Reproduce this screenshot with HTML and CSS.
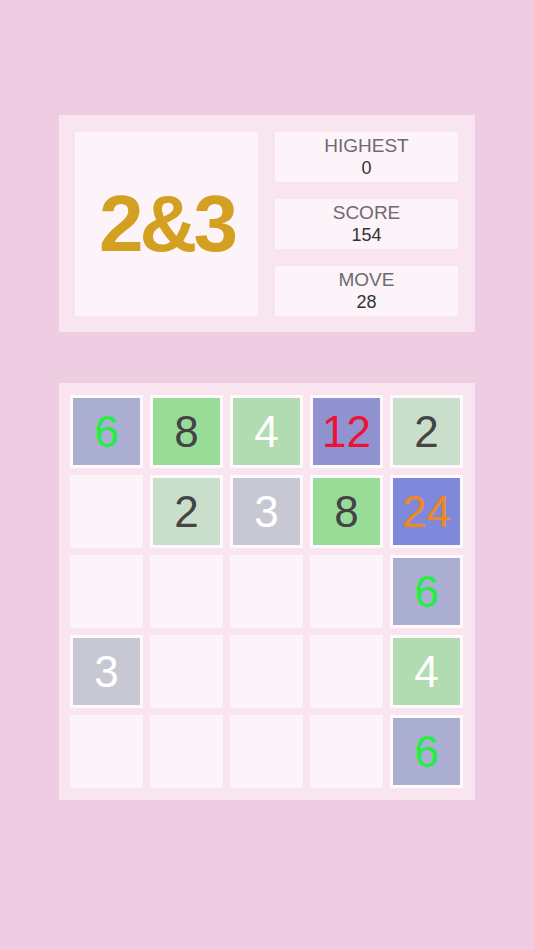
FILE: index.html
```html
<!DOCTYPE html>
<html lang="en">
<head>
    <meta charset="UTF-8">
    <meta name="viewport" content="width=device-width, initial-scale=1.0">
    <title>2&amp;3</title>
    <link rel="stylesheet" href="styles.css">
</head>
<body>

    <div class="game">
        <div class="top-panel">
            <div class="logo">2&amp;3</div>
            <div class="stats">
                <div class="stat">
                    <div class="stat-label">HIGHEST</div>
                    <div class="stat-value">0</div>
                </div>
                <div class="stat">
                    <div class="stat-label">SCORE</div>
                    <div class="stat-value">154</div>
                </div>
                <div class="stat">
                    <div class="stat-label">MOVE</div>
                    <div class="stat-value">28</div>
                </div>
            </div>
        </div>

        <div class="board">
            <div class="cell tile t6">6</div>
            <div class="cell tile t8">8</div>
            <div class="cell tile t4">4</div>
            <div class="cell tile t12">12</div>
            <div class="cell tile t2">2</div>

            <div class="cell"></div>
            <div class="cell tile t2">2</div>
            <div class="cell tile t3">3</div>
            <div class="cell tile t8">8</div>
            <div class="cell tile t24">24</div>

            <div class="cell"></div>
            <div class="cell"></div>
            <div class="cell"></div>
            <div class="cell"></div>
            <div class="cell tile t6">6</div>

            <div class="cell tile t3">3</div>
            <div class="cell"></div>
            <div class="cell"></div>
            <div class="cell"></div>
            <div class="cell tile t4">4</div>

            <div class="cell"></div>
            <div class="cell"></div>
            <div class="cell"></div>
            <div class="cell"></div>
            <div class="cell tile t6">6</div>
        </div>
    </div>

</body>
</html>
```

FILE: styles.css
```css
body {
    font-family: "Liberation Sans", Arial, sans-serif;
    background-color: #eecde2;
    margin: 0;
    padding: 0;
}

.game {
    width: 416px;
    margin: 0 auto;
    padding-top: 115px;
}

.top-panel {
    display: flex;
    gap: 17px;
    background-color: #f8e5f0;
    padding: 17px 17px 16px 16px;
}

.logo {
    width: 183px;
    height: 184px;
    background-color: #fcf4f9;
    display: flex;
    align-items: center;
    justify-content: center;
    font-size: 80px;
    font-weight: bold;
    letter-spacing: -4px;
    color: #d4a021;
}

.stats {
    flex: 1;
    display: flex;
    flex-direction: column;
    gap: 17px;
}

.stat {
    height: 50px;
    background-color: #fcf4f9;
    text-align: center;
    display: flex;
    flex-direction: column;
    justify-content: center;
}

.stat-label {
    font-size: 19px;
    line-height: 22px;
    color: #6f6a6e;
}

.stat-value {
    font-size: 18px;
    line-height: 22px;
    color: #333;
}

.board {
    margin-top: 51px;
    background-color: #f8e5f0;
    padding: 12px 12px 12px 11px;
    display: grid;
    grid-template-columns: repeat(5, 73px);
    grid-auto-rows: 73px;
    gap: 7px;
}

.cell {
    background-color: #fcf4f9;
}

.tile {
    border: 3px solid #fdf9fc;
    display: flex;
    align-items: center;
    justify-content: center;
    font-size: 44px;
}

.t2 { background-color: #c9dfcc; color: #444; }
.t3 { background-color: #c8c8d4; color: #fff; }
.t4 { background-color: #b1dcb1; color: #fff; }
.t6 { background-color: #aaaed1; color: #22ee44; }
.t8 { background-color: #98dc98; color: #444; }
.t12 { background-color: #9093d0; color: #ee1133; }
.t24 { background-color: #8088dc; color: #ee8822; }
```
